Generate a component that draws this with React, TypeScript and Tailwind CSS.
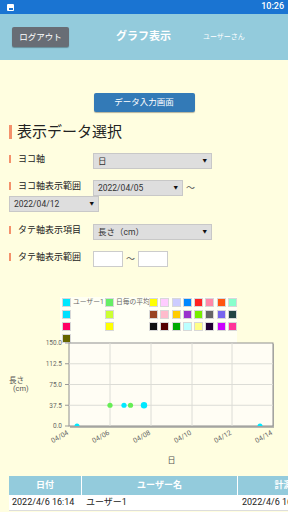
const font = { fontFamily: 'Roboto, "Noto Sans CJK JP", sans-serif' };

const legendRows: { a?: string; b?: string; c?: string[] }[] = [
  {
    a: '#00e8ff',
    b: '#66ee66',
    c: ['#ffff00', '#ffccff', '#ccccff', '#0088ff', '#ff2222', '#ff88aa', '#ff5511', '#88ffcc'],
  },
  {
    a: '#00e0ff',
    b: '#ccff33',
    c: ['#994422', '#ffbbcc', '#ffcc00', '#9933cc', '#77ee00', '#666666', '#7766ee', '#224444'],
  },
  {
    a: '#ff0066',
    b: '#ffff00',
    c: ['#111111', '#550000', '#00aa00', '#bbffff', '#ffff88', '#220033', '#cc00ff', '#ff3399'],
  },
  { a: '#666600' },
];

const Swatch = ({ color }: { color: string }) => (
  <span className="flex h-[9px] w-[9px] shrink-0 items-center justify-center border border-[#d8d8d8] bg-white">
    <span className="h-[7px] w-[7px]" style={{ backgroundColor: color }} />
  </span>
);

const Label = ({ children }: { children: React.ReactNode }) => (
  <div className="flex h-[16px] w-[84px] shrink-0 items-start pt-[1px]">
    <span className="mt-[1px] h-[8px] w-[2px] bg-[#f4916b]" />
    <span className="ml-[7px] text-[9px] leading-[10px] text-[#222]">{children}</span>
  </div>
);

const Select = ({ value, width }: { value: string; width: string }) => (
  <div
    className={`flex h-[16px] ${width} shrink-0 items-center justify-between border border-[#c8c8c8] bg-[#dedede] pl-[4px] pr-[4px] text-[8.5px] text-[#333]`}
  >
    <span>{value}</span>
    <span className="text-[4.5px] text-[#111]">▼</span>
  </div>
);

const Chart = () => {
  const xs = [69, 110, 151, 192, 232, 273];
  const dates = ['04/04', '04/06', '04/08', '04/10', '04/12', '04/14'];
  const ys = [2, 22.75, 43.5, 64.25, 85];
  const yl = ['150.0', '112.5', '75.0', '37.5', '0.0'];
  return (
    <svg width="288" height="134" className="-mx-[9px] mt-[-9px] block" style={font}>
      <defs>
        <clipPath id="plot">
          <rect x="69" y="2" width="204" height="83" />
        </clipPath>
      </defs>
      <g transform="translate(0,6)">
        <rect x="70" y="3" width="204" height="84" fill="#b9b9b0" />
        <rect x="69" y="2" width="204" height="83" fill="#fffdf4" stroke="#8f8f8f" strokeWidth="1" />
        {xs.slice(1, 5).map((x) => (
          <line key={x} x1={x} x2={x} y1={2} y2={85} stroke="#dcdcd6" />
        ))}
        {ys.slice(1, 4).map((y) => (
          <line key={y} x1={69} x2={273} y1={y} y2={y} stroke="#dcdcd6" />
        ))}
        <g clipPath="url(#plot)">
          <circle cx="77" cy="85" r="2.5" fill="#00e8ff" />
          <circle cx="260" cy="85" r="2.5" fill="#00e8ff" />
        </g>
        <circle cx="110" cy="64.25" r="2.6" fill="#66ee55" />
        <circle cx="124" cy="64.25" r="2.6" fill="#00e8ff" />
        <circle cx="130.5" cy="64.25" r="2.6" fill="#66ee55" />
        <circle cx="144" cy="64.25" r="3.2" fill="#00e8ff" />
        {ys.map((y, i) => (
          <g key={y}>
            <line x1={65} x2={69} y1={y} y2={y} stroke="#999" />
            <text x={62} y={y + 2.3} fontSize="6.5" textAnchor="end" fill="#666">
              {yl[i]}
            </text>
          </g>
        ))}
        {xs.map((x, i) => (
          <text
            key={x}
            x={x}
            y={93}
            fontSize="7"
            textAnchor="end"
            fill="#666"
            transform={`rotate(-30 ${x} 93)`}
          >
            {dates[i]}
          </text>
        ))}
        <text x="9" y="42" fontSize="7.5" fill="#555">
          長さ
        </text>
        <text x="13" y="50" fontSize="7.5" fill="#555">
          (cm)
        </text>
        <text x="171.5" y="122" fontSize="8" textAnchor="middle" fill="#555">
          日
        </text>
      </g>
    </svg>
  );
};

export default function App() {
  return (
    <div className="h-[512px] w-[288px] overflow-hidden bg-[#fffee0]" style={font}>
      <div className="flex h-[14px] items-center justify-between bg-[#1a74d2] pl-[7px] pr-[4px]">
        <span className="flex h-[7px] w-[7px] items-end justify-center rounded-[1px] bg-white pb-[1px]">
          <span className="h-[2px] w-[4px] bg-[#1a74d2]" />
        </span>
        <span className="text-[9px] font-medium text-white">10:26</span>
      </div>

      <div className="flex h-[46px] items-center bg-[#93cbdc] pl-[12px]">
        <div className="flex h-[20px] w-[57px] items-center justify-center rounded-[2px] bg-[#686d75] text-[8.5px] text-white shadow-[0_1px_1px_rgba(0,0,0,0.3)]">
          ログアウト
        </div>
        <div className="ml-[47px] text-[11px] font-bold text-white">グラフ表示</div>
        <div className="ml-[32px] text-[7px] text-white">ユーザーさん</div>
      </div>

      <div className="px-[9px]">
        <div className="mt-[33px] flex justify-center">
          <div className="flex h-[19px] w-[101px] items-center justify-center rounded-[2px] bg-[#337ab7] text-[8.5px] text-white shadow-[0_1px_1px_rgba(0,0,0,0.3)]">
            データ入力画面
          </div>
        </div>

        <div className="mt-[11px] flex h-[18px] items-center">
          <span className="h-[14px] w-[3px] bg-[#f4916b]" />
          <span className="ml-[5px] text-[15px] leading-[18px] text-[#222]">表示データ選択</span>
        </div>

        <div className="mt-[12px] flex">
          <Label>ヨコ軸</Label>
          <Select value="日" width="w-[119px]" />
        </div>

        <div className="mt-[11px] flex flex-wrap items-start">
          <Label>ヨコ軸表示範囲</Label>
          <Select value="2022/04/05" width="w-[90px]" />
          <span className="ml-[3px] w-[14px] text-[9px] leading-[16px] text-[#555]">〜</span>
          <Select value="2022/04/12" width="w-[90px]" />
        </div>

        <div className="mt-[12px] flex">
          <Label>タテ軸表示項目</Label>
          <Select value="長さ（cm）" width="w-[119px]" />
        </div>

        <div className="mt-[11px] flex items-start">
          <Label>タテ軸表示範囲</Label>
          <span className="h-[16px] w-[30px] border border-[#ccc] bg-white" />
          <span className="mx-[3px] text-[9px] leading-[16px] text-[#555]">〜</span>
          <span className="h-[16px] w-[30px] border border-[#ccc] bg-white" />
        </div>

        <div className="ml-[51px] mt-[30px] flex w-[177px] flex-col gap-[3px] bg-[#fffff4] py-[1px]">
          {legendRows.map((r, i) => (
            <div key={i} className="flex h-[9px] items-center">
              <div className="flex w-[45px] items-center gap-[2px] pl-[2px]">
                {r.a && <Swatch color={r.a} />}
                {i === 0 && (
                  <span className="whitespace-nowrap text-[6.8px] leading-[9px] text-[#666]">ユーザー1</span>
                )}
              </div>
              <div className="flex w-[44px] items-center gap-[2px]">
                {r.b && <Swatch color={r.b} />}
                {i === 0 && (
                  <span className="whitespace-nowrap text-[6.8px] leading-[9px] text-[#666]">日毎の平均</span>
                )}
              </div>
              <div className="flex gap-[2.3px]">
                {r.c?.map((c) => <Swatch key={c} color={c} />)}
              </div>
            </div>
          ))}
        </div>

        <Chart />

        <div className="mt-[7px] w-[400px] text-[9px]">
          <div className="flex h-[19px] bg-[#93cbdc] font-bold text-white">
            <div className="flex w-[73px] items-center justify-center border-r border-white">日付</div>
            <div className="flex w-[156px] items-center justify-center border-r border-white">ユーザー名</div>
            <div className="flex w-[100px] items-center justify-center">計測日</div>
          </div>
          <div className="flex h-[16px] items-center border-b border-[#ddd] bg-white text-[#222]">
            <div className="w-[73px] pl-[3px]">2022/4/6 16:14</div>
            <div className="w-[156px] pl-[4px]">ユーザー1</div>
            <div className="w-[100px] pl-[4px]">2022/4/6 16:14</div>
          </div>
        </div>
      </div>
    </div>
  );
}
